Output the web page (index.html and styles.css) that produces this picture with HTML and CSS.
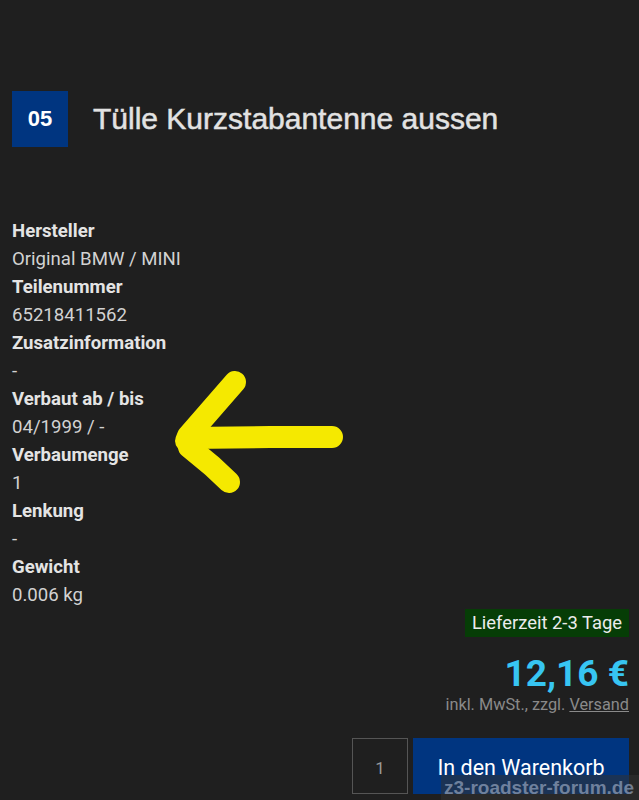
FILE: index.html
```html
<!DOCTYPE html>
<html lang="de">
<head>
  <meta charset="UTF-8" />
  <title>Tülle Kurzstabantenne aussen</title>
  <link rel="stylesheet" href="styles.css">
</head>
<body>

  <main class="product">
    <div class="product-head">
      <span class="pos">05</span>
      <h1>Tülle Kurzstabantenne aussen</h1>
    </div>

    <dl class="specs">
      <dt>Hersteller</dt>
      <dd>Original BMW / MINI</dd>
      <dt>Teilenummer</dt>
      <dd>65218411562</dd>
      <dt>Zusatzinformation</dt>
      <dd>-</dd>
      <dt>Verbaut ab / bis</dt>
      <dd>04/1999 / -</dd>
      <dt>Verbaumenge</dt>
      <dd>1</dd>
      <dt>Lenkung</dt>
      <dd>-</dd>
      <dt>Gewicht</dt>
      <dd>0.006 kg</dd>
    </dl>

    <div class="buy">
      <span class="delivery">Lieferzeit 2-3 Tage</span>
      <div class="price">12,16 €</div>
      <div class="tax">inkl. MwSt., zzgl. <a href="#">Versand</a></div>
      <form class="cart">
        <input class="qty" type="text" value="1">
        <button type="submit">In den Warenkorb</button>
      </form>
    </div>
  </main>

  <!-- hand drawn marker arrow -->
  <svg class="arrow" width="639" height="800" viewBox="0 0 639 800">
    <g fill="none" stroke="#f5e900" stroke-width="22" stroke-linecap="round" stroke-linejoin="round">
      <path d="M235 382 L188 436 L186 441" />
      <path d="M188 438 L270 437 L332 437" />
      <path d="M189 447 L212 466 L229 482" />
    </g>
  </svg>

  <div class="watermark">z3-roadster-forum.de</div>

</body>
</html>
```

FILE: styles.css
```css
body {
  margin: 0;
  padding: 0;
  background: #1f1f1f;
  font-family: Roboto, "Liberation Sans", sans-serif;
  color: #dedede;
}

.product {
  padding: 91px 10px 0 12px;
}

.product-head {
  display: flex;
  align-items: center;
  gap: 25px;
}

.pos {
  width: 56px;
  height: 56px;
  display: flex;
  align-items: center;
  justify-content: center;
  background: #003580;
  color: white;
  font-family: "Liberation Sans", Arial, sans-serif;
  font-weight: bold;
  font-size: 22px;
}

h1 {
  margin: 0;
  font-family: "Liberation Sans", Arial, sans-serif;
  font-weight: normal;
  font-size: 30px;
  color: #e2e2e2;
  -webkit-text-stroke: 0.5px #e2e2e2;
}

.specs {
  margin: 70px 0 0 0;
  font-size: 18.6px;
  line-height: 28px;
}

.specs dt {
  font-weight: bold;
  color: #e4e4e4;
}

.specs dd {
  margin: 0;
  color: #d2d2d2;
}

.buy {
  display: flex;
  flex-direction: column;
  align-items: flex-end;
}

.delivery {
  background: #063d06;
  color: #ececec;
  font-size: 18.4px;
  line-height: 28px;
  padding: 0 7px;
}

.price {
  margin-top: 17px;
  font-size: 37px;
  font-weight: bold;
  line-height: 40px;
  color: #37c5f2;
}

.tax {
  font-size: 16.3px;
  line-height: 22px;
  color: #8a8a8a;
}

.tax a {
  color: #8a8a8a;
}

.cart {
  display: flex;
  gap: 5px;
  margin-top: 22px;
}

.qty {
  width: 56px;
  height: 56px;
  box-sizing: border-box;
  border: 1px solid #555;
  background: #1f1f1f;
  color: #999;
  text-align: center;
  font-family: Roboto, sans-serif;
  font-size: 17px;
  padding-top: 4px;
}

button {
  width: 216px;
  height: 56px;
  border: none;
  background: #003580;
  color: white;
  font-family: Roboto, sans-serif;
  font-size: 21.5px;
  padding-top: 3px;
}

.arrow {
  position: absolute;
  left: 0;
  top: 0;
  pointer-events: none;
}

.watermark {
  position: absolute;
  right: 0;
  top: 775px;
  width: 198px;
  height: 25px;
  box-sizing: border-box;
  background: rgba(50, 50, 50, 0.55);
  color: rgba(150, 165, 190, 0.7);
  font-family: "Liberation Sans", Arial, sans-serif;
  font-weight: bold;
  font-size: 19px;
  line-height: 25px;
  padding-left: 3px;
  white-space: nowrap;
  overflow: hidden;
}
```
